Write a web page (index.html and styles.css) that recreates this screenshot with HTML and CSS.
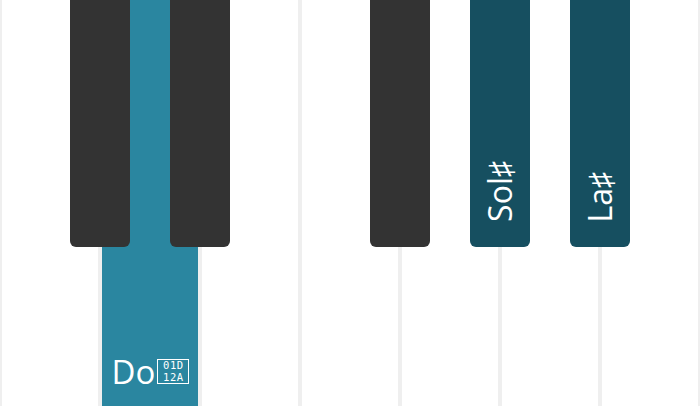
FILE: index.html
```html
<!DOCTYPE html>
<html>
<head>
<meta charset="utf-8">
<link rel="stylesheet" href="styles.css">
</head>
<body>
<div class="piano">
  <div class="white"></div>
  <div class="white active"><div class="label"><span class="note">Do</span><span class="tofu"><span class="hex">01D</span><span class="hex">12A</span></span></div></div>
  <div class="white"></div>
  <div class="white"></div>
  <div class="white"></div>
  <div class="white"></div>
  <div class="white"></div>
  <div class="black k1"></div>
  <div class="black k2"></div>
  <div class="black k3"></div>
  <div class="black k4 marked"><span class="vlabel">Sol&#x266F;</span></div>
  <div class="black k5 marked"><span class="vlabel">La&#x266F;</span></div>
</div>
</body>
</html>
```
FILE: styles.css
```css
html, body {
  margin: 0;
  padding: 0;
  background: #ffffff;
  overflow: hidden;
}
.piano {
  position: relative;
  display: flex;
  width: 700px;
  height: 406px;
  font-family: "Open Sans", "Noto Sans", sans-serif;
}
.white {
  box-sizing: border-box;
  flex: 0 0 100px;
  height: 406px;
  background: #ffffff;
  border-left: 2px solid #efefef;
  border-right: 2px solid #efefef;
  display: flex;
  flex-direction: column;
  justify-content: flex-end;
  align-items: center;
}
.white.active {
  background: #2a86a0;
}
.label {
  display: flex;
  align-items: flex-end;
  color: #ffffff;
  padding-bottom: 18px;
  margin-left: 1px;
  white-space: nowrap;
}
.note {
  font-size: 33px;
  line-height: 32px;
}
.tofu {
  display: flex;
  flex-direction: column;
  justify-content: center;
  align-items: center;
  box-sizing: border-box;
  width: 32px;
  height: 25px;
  margin-left: 2px;
  margin-bottom: 4px;
  border: 1px solid #ffffff;
}
.hex {
  display: block;
  height: 11.5px;
  font-family: "DejaVu Sans Mono", monospace;
  font-size: 10.5px;
  line-height: 11.5px;
  letter-spacing: 0.6px;
}
.black {
  position: absolute;
  top: 0;
  width: 60px;
  height: 247px;
  background: #333333;
  border-radius: 0 0 6px 6px;
  display: flex;
  flex-direction: column;
  justify-content: flex-end;
  align-items: center;
}
.black.marked {
  background: #164f60;
}
.k1 { left: 70px; }
.k2 { left: 170px; }
.k3 { left: 370px; }
.k4 { left: 470px; }
.k5 { left: 570px; }
.vlabel {
  color: #ffffff;
  font-size: 32px;
  line-height: 36px;
  writing-mode: vertical-rl;
  text-orientation: sideways;
  transform: rotate(180deg);
  margin-bottom: 25px;
}
```
